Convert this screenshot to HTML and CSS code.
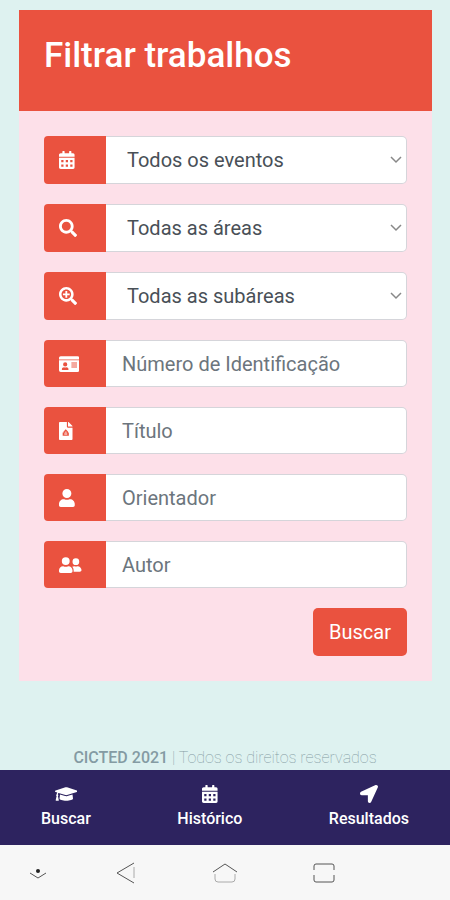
FILE: index.html
```
<!DOCTYPE html>
<html lang="pt-BR">
<head>
    <meta charset="UTF-8">
    <meta name="viewport" content="width=device-width, initial-scale=1.0">
    <title>CICTED 2021 - Filtrar trabalhos</title>
    <link rel="stylesheet" href="styles.css">
</head>
<body>
    <!-- Shared icons -->
    <svg class="icon-defs" aria-hidden="true">
        <symbol id="calendar" viewBox="0 0 448 512">
            <path fill-rule="evenodd" d="M0 464c0 26.500 21.500 48 48 48h352c26.500 0 48-21.500 48-48V192H0zM64 256h64v64H64zM192 256h64v64h-64zM320 256h64v64h-64zM64 384h64v64H64zM192 384h64v64h-64zM320 384h64v64h-64zM400 64h-48V16c0-8.800-7.200-16-16-16h-32c-8.800 0-16 7.200-16 16v48H160V16c0-8.800-7.200-16-16-16h-32c-8.800 0-16 7.200-16 16v48H48C21.500 64 0 85.500 0 112v48h448v-48c0-26.500-21.500-48-48-48z"/>
        </symbol>
    </svg>

    <main class="content">
        <section class="card">
            <div class="card-header">
                <h1 class="card-title">Filtrar trabalhos</h1>
            </div>
            <form class="card-body" action="#">
                <div class="input-group">
                    <label class="input-icon" for="evento" aria-label="Evento">
                        <svg class="icon" viewBox="0 0 448 512"><use href="#calendar"/></svg>
                    </label>
                    <select class="form-control form-select" id="evento">
                        <option>Todos os eventos</option>
                    </select>
                </div>
                <div class="input-group">
                    <label class="input-icon" for="area" aria-label="Área">
                        <svg class="icon" viewBox="0 0 512 512"><path d="M505 442.700L405.300 343c-4.500-4.500-10.600-7-17-7H372c27.600-35.300 44-79.700 44-128C416 93.100 322.900 0 208 0S0 93.100 0 208s93.100 208 208 208c48.300 0 92.700-16.400 128-44v16.300c0 6.400 2.500 12.500 7 17l99.700 99.700c9.400 9.400 24.600 9.400 33.900 0l28.300-28.300c9.400-9.400 9.400-24.600.1-34zM208 336c-70.700 0-128-57.200-128-128 0-70.700 57.200-128 128-128 70.700 0 128 57.200 128 128 0 70.700-57.200 128-128 128z"/></svg>
                    </label>
                    <select class="form-control form-select" id="area">
                        <option>Todas as áreas</option>
                    </select>
                </div>
                <div class="input-group">
                    <label class="input-icon" for="subarea" aria-label="Subárea">
                        <svg class="icon" viewBox="0 0 512 512"><path d="M505 442.700L405.300 343c-4.500-4.500-10.600-7-17-7H372c27.600-35.300 44-79.700 44-128C416 93.100 322.900 0 208 0S0 93.100 0 208s93.100 208 208 208c48.300 0 92.700-16.400 128-44v16.300c0 6.400 2.500 12.500 7 17l99.700 99.700c9.400 9.400 24.600 9.400 33.900 0l28.300-28.300c9.400-9.400 9.400-24.600.1-34zM208 344c-75 0-136-61-136-136S133 72 208 72s136 61 136 136-61 136-136 136z"/><path d="M182 112h52v70h70v52h-70v70h-52v-70h-70v-52h70z"/></svg>
                    </label>
                    <select class="form-control form-select" id="subarea">
                        <option>Todas as subáreas</option>
                    </select>
                </div>
                <div class="input-group">
                    <label class="input-icon" for="numero" aria-label="Número de Identificação">
                        <svg class="icon" viewBox="0 0 576 512"><path fill-rule="evenodd" d="M48 32h480a48 48 0 0 1 48 48v48H0V80a48 48 0 0 1 48-48zM0 152h576v280a48 48 0 0 1-48 48H48a48 48 0 0 1-48-48zM176 208a60 60 0 1 0 0 120 60 60 0 0 0 0-120zM80 410c0 8 6 14 14 14h164c8 0 14-6 14-14 0-38-30-62-64-62-20 8-44 8-64 0-34 0-64 24-64 62zM352 216h160v28H352zM352 272h160v28H352zM352 328h160v28H352z"/></svg>
                    </label>
                    <input class="form-control" type="text" id="numero" placeholder="Número de Identificação">
                </div>
                <div class="input-group">
                    <label class="input-icon" for="titulo" aria-label="Título">
                        <svg class="icon" viewBox="0 0 384 512"><path fill-rule="evenodd" d="M24 0h200v136c0 13 11 24 24 24h136v328c0 13-11 24-24 24H24c-13 0-24-11-24-24V24C0 11 11 0 24 0zM256 0h6c6 0 12 3 17 7l98 98c4 5 7 11 7 17v6H256zM192 208l-62 62v32h-26v90h176v-90h-26v-32zM150 324h84v16h-84zM150 356h84v16h-84zM164 280h56v20h-56z"/></svg>
                    </label>
                    <input class="form-control" type="text" id="titulo" placeholder="Título">
                </div>
                <div class="input-group">
                    <label class="input-icon" for="orientador" aria-label="Orientador">
                        <svg class="icon" viewBox="0 0 448 512"><path d="M224 256a128 128 0 1 0 0-256 128 128 0 0 0 0 256zm90 32h-17c-46 21-100 21-146 0h-17C60 288 0 348 0 422v42c0 26 22 48 48 48h352c26 0 48-22 48-48v-42c0-74-60-134-134-134z"/></svg>
                    </label>
                    <input class="form-control" type="text" id="orientador" placeholder="Orientador">
                </div>
                <div class="input-group">
                    <label class="input-icon" for="autor" aria-label="Autor">
                        <svg class="icon" viewBox="0 0 640 512"><path d="M192 256a112 112 0 1 0 0-224 112 112 0 0 0 0 224zm77 32h-8c-44 21-94 21-138 0h-8C52 288 0 340 0 403v29c0 26 22 48 48 48h288c26 0 48-22 48-48v-29c0-63-52-115-115-115zM480 256a96 96 0 1 0 0-192 96 96 0 0 0 0 192zm48 32h-4c-28 10-60 10-88 0h-4c-20 0-39 6-56 16 25 27 40 62 40 101v43h176c26 0 48-22 48-48 0-62-50-112-112-112z"/></svg>
                    </label>
                    <input class="form-control" type="text" id="autor" placeholder="Autor">
                </div>
                <button class="btn-search" type="submit">Buscar</button>
            </form>
        </section>
    </main>

    <footer class="copyright"><strong>CICTED 2021</strong> | Todos os direitos reservados</footer>

    <nav class="tab-bar">
        <a class="tab" href="#">
            <svg class="icon" viewBox="0 0 640 512"><path d="M622.340 153.200L343.400 67.500c-15.200-4.670-31.600-4.670-46.790 0L17.660 153.200c-23.540 7.230-23.540 38.360 0 45.590l48.630 14.940c-10.670 13.190-17.230 29.280-17.880 46.900C38.780 266.150 32 276.110 32 288c0 10.780 5.680 19.850 13.860 25.650L20.330 428.530C18.110 438.520 25.710 448 35.940 448h56.110c10.240 0 17.840-9.480 15.620-19.470L82.140 313.650C90.320 307.850 96 298.780 96 288c0-11.570-6.470-21.250-15.660-26.870.76-15.020 8.440-28.300 20.690-36.720L296.600 284.500c9.060 2.780 26.440 6.250 46.790 0l278.950-85.700c23.550-7.240 23.550-38.360 0-45.600zM352.790 315.090c-28.530 8.760-52.840 3.920-65.590 0l-145.020-44.550L128 384c0 35.350 85.960 64 192 64s192-28.650 192-64l-14.180-113.470-145.030 44.560z"/></svg>
            Buscar
        </a>
        <a class="tab" href="#">
            <svg class="icon" viewBox="0 0 448 512"><use href="#calendar"/></svg>
            Histórico
        </a>
        <a class="tab" href="#">
            <svg class="icon" viewBox="0 0 512 512"><path d="M444.520 3.520L28.740 195.420c-47.970 22.390-31.980 92.750 19.190 92.750h175.910v175.910c0 51.170 70.360 67.170 92.750 19.190l191.900-415.780c15.990-38.390-25.590-79.970-63.970-63.970z"/></svg>
            Resultados
        </a>
    </nav>

    <!-- Android navigation keys -->
    <div class="system-bar">
        <button class="system-key" type="button" aria-label="Ocultar">
            <svg width="24" height="24" viewBox="0 0 24 24"><path d="M4 12l8 5 8-5"/><circle class="dot" cx="12" cy="10" r="2"/></svg>
        </button>
        <button class="system-key" type="button" aria-label="Voltar">
            <svg width="24" height="24" viewBox="0 0 24 24"><path d="M20 2L3 12l17 10"/><path class="faint" d="M20 6v11"/></svg>
        </button>
        <button class="system-key" type="button" aria-label="Início">
            <svg width="26" height="24" viewBox="0 0 26 24"><path d="M1 11l12-8 12 8"/><path class="faint" d="M3 13v5q0 3 3 3h14q3 0 3-3v-5"/></svg>
        </button>
        <button class="system-key" type="button" aria-label="Recentes">
            <svg width="24" height="24" viewBox="0 0 24 24"><path d="M2 9V5q0-2 2-2h16q2 0 2 2v4M2 14v5q0 2 2 2h16q2 0 2-2v-5"/></svg>
        </button>
    </div>
</body>
</html>
```
FILE: styles.css
```
* {
    box-sizing: border-box;
}
body {
    display: flex;
    flex-direction: column;
    min-height: 100vh;
    margin: 0;
    background: #def2f0;
    font-family: Roboto, sans-serif;
    color: #495057;
}
.icon-defs {
    position: absolute;
    width: 0;
    height: 0;
}
.icon {
    height: 18px;
    fill: #fff;
}
.content {
    flex: 1;
    padding: 10px 18px 20px 19px;
}
.card {
    background: #fde0e9;
}
.card-header {
    padding: 25px 25px 34px;
    background: #ea523f;
}
.card-title {
    margin: 0;
    font-size: 35px;
    font-weight: 500;
    line-height: 42px;
    color: #fff;
}
.card-body {
    display: flex;
    flex-direction: column;
    gap: 20px;
    padding: 25px;
}
.input-group {
    display: flex;
}
.input-icon {
    display: flex;
    align-items: center;
    width: 62px;
    padding-left: 15px;
    background: #ea523f;
    border-radius: 4px 0 0 4px;
}
.form-control {
    flex: 1;
    min-width: 0;
    height: 47px;
    padding: 0 16px;
    border: 1px solid #d5d5da;
    border-left: 0;
    border-radius: 0 5px 5px 0;
    background: #fff;
    font-family: inherit;
    font-size: 20px;
    color: #495057;
}
.form-control::placeholder {
    color: #6c757d;
    opacity: 1;
}
.form-select {
    height: 48px;
    padding: 0 21px;
    appearance: none;
    background: #fff url("data:image/svg+xml,%3Csvg xmlns='http://www.w3.org/2000/svg' width='12' height='8' viewBox='0 0 12 8'%3E%3Cpath d='M1 1l5 5 5-5' fill='none' stroke='%23888' stroke-width='1.500'/%3E%3C/svg%3E") no-repeat right 4px center;
}
.btn-search {
    align-self: flex-end;
    height: 48px;
    padding: 0 16px;
    border: 0;
    border-radius: 5px;
    background: #ea523f;
    font-family: inherit;
    font-size: 20px;
    color: #fff;
}
.copyright {
    padding-bottom: 2px;
    font-size: 16px;
    font-weight: 100;
    line-height: 20px;
    text-align: center;
    color: #849ba3;
}
.copyright strong {
    font-weight: 500;
}
.tab-bar {
    display: flex;
    justify-content: space-between;
    padding: 15px 41px;
    background: #2d235f;
}
.tab {
    display: flex;
    flex-direction: column;
    align-items: center;
    gap: 5px;
    height: 45px;
    font-size: 16px;
    font-weight: 500;
    line-height: 22px;
    color: #fff;
    text-decoration: none;
}
.system-bar {
    display: grid;
    grid-template-columns: 17% repeat(3, 22%);
    height: 55px;
    background: #f7f7f7;
}
.system-key {
    display: flex;
    align-items: center;
    justify-content: center;
    padding: 0;
    border: 0;
    background: none;
}
.system-key svg {
    fill: none;
    stroke: #555;
}
.system-key .dot {
    fill: #222;
    stroke: none;
}
.system-key .faint {
    stroke: #aaa;
}
```
